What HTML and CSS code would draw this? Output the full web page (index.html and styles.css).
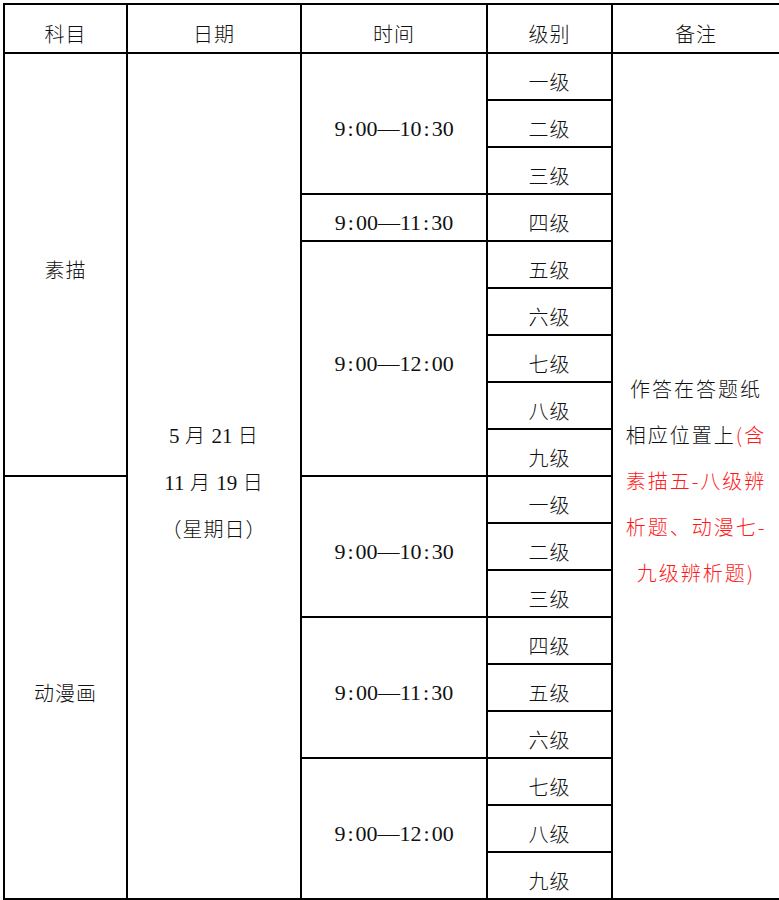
FILE: index.html
```html
<!DOCTYPE html>
<html lang="zh-CN">
<head>
<meta charset="utf-8">
<title>考试安排</title>
<link rel="stylesheet" href="styles.css">
</head>
<body>
<table class="schedule">
  <colgroup>
    <col class="c-subject">
    <col class="c-date">
    <col class="c-time">
    <col class="c-level">
    <col class="c-note">
  </colgroup>
  <thead>
    <tr class="head">
      <th>科目</th>
      <th>日期</th>
      <th>时间</th>
      <th>级别</th>
      <th>备注</th>
    </tr>
  </thead>
  <tbody>
    <tr>
      <td rowspan="9">素描</td>
      <td rowspan="18" class="date">
        <div class="line"><span class="num">5</span> 月 <span class="num">21</span> 日</div>
        <div class="line"><span class="num">11</span> 月 <span class="num">19</span> 日</div>
        <div class="line">（星期日）</div>
      </td>
      <td rowspan="3" class="time">9<span class="colon">:</span>00—10<span class="colon">:</span>30</td>
      <td>一级</td>
      <td rowspan="18" class="note">
        <div class="line">作答在答题纸</div>
        <div class="line">相应位置上<span class="red">(含</span></div>
        <div class="line red">素描五-八级辨</div>
        <div class="line red">析题、动漫七-</div>
        <div class="line red">九级辨析题)</div>
      </td>
    </tr>
    <tr><td>二级</td></tr>
    <tr><td>三级</td></tr>
    <tr>
      <td class="time">9<span class="colon">:</span>00—11<span class="colon">:</span>30</td>
      <td>四级</td>
    </tr>
    <tr>
      <td rowspan="5" class="time">9<span class="colon">:</span>00—12<span class="colon">:</span>00</td>
      <td>五级</td>
    </tr>
    <tr><td>六级</td></tr>
    <tr><td>七级</td></tr>
    <tr><td>八级</td></tr>
    <tr><td>九级</td></tr>
    <tr>
      <td rowspan="9">动漫画</td>
      <td rowspan="3" class="time">9<span class="colon">:</span>00—10<span class="colon">:</span>30</td>
      <td>一级</td>
    </tr>
    <tr><td>二级</td></tr>
    <tr><td>三级</td></tr>
    <tr>
      <td rowspan="3" class="time">9<span class="colon">:</span>00—11<span class="colon">:</span>30</td>
      <td>四级</td>
    </tr>
    <tr><td>五级</td></tr>
    <tr><td>六级</td></tr>
    <tr>
      <td rowspan="3" class="time">9<span class="colon">:</span>00—12<span class="colon">:</span>00</td>
      <td>七级</td>
    </tr>
    <tr><td>八级</td></tr>
    <tr><td>九级</td></tr>
  </tbody>
</table>
</body>
</html>
```

FILE: styles.css
```css
html, body {
  margin: 0;
  padding: 0;
  background: #ffffff;
}

body {
  padding: 3px 0 0 3px;
  font-family: "Noto Sans CJK SC", "Liberation Serif", sans-serif;
  color: #111111;
}

.schedule {
  border-collapse: collapse;
  table-layout: fixed;
  width: 776px;
}

.c-subject { width: 123px; }
.c-date { width: 174px; }
.c-time { width: 186px; }
.c-level { width: 125px; }
.c-note { width: 168px; }

.schedule th,
.schedule td {
  border: 2px solid #000000;
  padding: 10px 0 0 0;
  text-align: center;
  vertical-align: middle;
  font-size: 20px;
  font-weight: 300;
  letter-spacing: 1px;
  line-height: 26px;
}

.schedule tr.head th {
  height: 37px;
}

.schedule tbody tr {
  height: 47px;
}

.schedule td.time {
  font-family: "Liberation Serif", "Noto Sans CJK SC", serif;
  font-size: 22px;
  letter-spacing: 0;
  font-weight: 400;
}

.colon {
  margin: 0 2px;
}

.schedule td.date .line,
.schedule td.note .line {
  line-height: 46px;
}

.schedule td.date {
  padding-top: 12px;
}

.num {
  font-family: "Liberation Serif", serif;
  font-size: 21px;
  font-weight: 400;
  letter-spacing: 0;
}

.schedule td.note {
  letter-spacing: 2px;
  padding-top: 10px;
}

.red {
  color: #ff1a1a;
}
```
